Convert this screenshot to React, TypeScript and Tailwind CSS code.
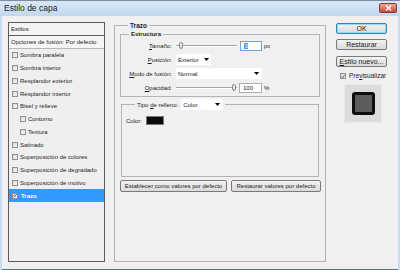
import React from "react";

function Check({ checked = false }: { checked?: boolean }) {
  return (
    <span className="w-[6px] h-[6px] shrink-0 border border-[#8e8f8f] bg-gradient-to-br from-[#d8d8d8] to-[#fbfbfb] flex items-center justify-center">
      {checked && (
        <svg width="5" height="5" viewBox="0 0 5 5">
          <path d="M0.6 2.6 L2 4 L4.5 0.8" stroke="#1f3e6e" strokeWidth="1.1" fill="none" />
        </svg>
      )}
    </span>
  );
}

const items: { t: string; indent?: boolean; sel?: boolean }[] = [
  { t: "Sombra paralela" },
  { t: "Sombra interior" },
  { t: "Resplandor exterior" },
  { t: "Resplandor interior" },
  { t: "Bisel y relieve" },
  { t: "Contorno", indent: true },
  { t: "Textura", indent: true },
  { t: "Satinado" },
  { t: "Superposición de colores" },
  { t: "Superposición de degradado" },
  { t: "Superposición de motivo" },
  { t: "Trazo", sel: true },
];

function Arrow() {
  return (
    <svg width="5" height="3" viewBox="0 0 5 3" className="shrink-0">
      <path d="M0 0 H5 L2.5 3 Z" fill="#000" />
    </svg>
  );
}

function Slider({ pos }: { pos: number }) {
  return (
    <div className="relative w-[61px] h-[11px] flex items-center shrink-0">
      <div className="w-full h-[2px] border-t border-[#a5a5a5] border-b border-b-white" />
      <div
        className="absolute top-[2px] w-[4px] h-[7px] rounded-[2px] border border-[#8a8a8a] bg-gradient-to-b from-[#fafafa] to-[#d6d6d6]"
        style={{ left: pos }}
      />
    </div>
  );
}

function Btn({ children, def = false, w }: { children: React.ReactNode; def?: boolean; w: string }) {
  return (
    <div
      className={
        "flex items-center justify-center whitespace-nowrap rounded-[2px] border leading-none text-[#1a1a1a] bg-gradient-to-b from-[#f3f3f3] to-[#dadada] " +
        w +
        (def ? " border-[#3c7fb1] shadow-[inset_0_0_0_1px_#8fdcf8]" : " border-[#7a7a7a]")
      }
    >
      {children}
    </div>
  );
}

export default function App() {
  return (
    <div className="w-[400px] h-[270px] flex flex-col overflow-hidden bg-[#c8dbef] font-['Liberation_Sans',Arial,sans-serif] text-[#1e1e1e]">
      {/* title bar */}
      <div className="h-[16px] shrink-0 flex items-center justify-between border-t border-[#7f8e9e] bg-gradient-to-b from-[#d9e7f6] to-[#c3d8ef] pl-[4px] pr-[3px]">
        <span className="text-[8.5px] leading-none text-[#1a1a1a]">Estilo de capa</span>
        <div className="w-[18px] h-[10px] mb-[1px] rounded-[2px] border border-[#8a3a32] bg-gradient-to-b from-[#e9a99c] to-[#c9463a] flex items-center justify-center">
          <svg width="7" height="6" viewBox="0 0 7 6">
            <path d="M1 0.5 L6 5.5 M6 0.5 L1 5.5" stroke="#fff" strokeWidth="1.4" />
          </svg>
        </div>
      </div>

      {/* body */}
      <div className="flex-1 flex ml-[2px] mr-[2px] bg-[#f0f0f0] border-b border-[#27849e] pt-[6px] pl-[6px] pb-[7px]">
        {/* left list */}
        <div className="w-[97px] shrink-0 border border-[#5c5c5c] bg-[#efefef] flex flex-col text-[6px] leading-none whitespace-nowrap">
          <div className="h-[13px] shrink-0 flex items-center pl-[2px] border-b border-[#5c5c5c] bg-[#f5f5f5]">Estilos</div>
          <div className="h-[13px] shrink-0 flex items-center pl-[2px] border-b border-[#b8b8b8] bg-[#f5f5f5]">
            Opciones de fusión: Por defecto
          </div>
          {items.map((it) => (
            <div
              key={it.t}
              className={
                "h-[12.75px] shrink-0 flex items-center gap-[2px] " +
                (it.indent ? "pl-[11px] " : "pl-[3px] ") +
                (it.sel ? "bg-[#3399ff] text-white font-bold" : "")
              }
            >
              <Check checked={!!it.sel} />
              <span className={it.sel ? "pl-[1px]" : ""}>{it.t}</span>
            </div>
          ))}
        </div>

        {/* main group */}
        <fieldset className="w-[212px] shrink-0 ml-[9px] border border-[#b4b4b4] px-[5px] text-[6px] leading-none whitespace-nowrap">
          <legend className="ml-[8px] px-[2px] font-bold text-[6.5px] leading-[7px]">Trazo</legend>
          <fieldset className="border border-[#b4b4b4] mt-[1px] pt-[2px] pb-[3px]">
            <legend className="ml-[8px] px-[2px] font-bold text-[6px] leading-[8px]">Estructura</legend>
            <div className="flex flex-col gap-[3px]">
              <div className="flex items-center h-[11px]">
                <span className="w-[55px] text-right pr-[4px]">
                  <u>T</u>amaño:
                </span>
                <Slider pos={3} />
                <div className="ml-[3px] w-[22px] h-[10px] border border-[#6ea5d8] bg-white flex items-center pl-[3px]">
                  <span className="bg-[#3399ff] text-white px-[0.5px]">3</span>
                </div>
                <span className="ml-[2px]">px</span>
              </div>
              <div className="flex items-center h-[11px]">
                <span className="w-[55px] text-right pr-[4px]">
                  <u>P</u>osición:
                </span>
                <div className="w-[35px] h-[11px] bg-white flex items-center justify-between pl-[2px] pr-[2px]">
                  <span>Exterior</span>
                  <Arrow />
                </div>
              </div>
              <div className="flex items-center h-[11px]">
                <span className="w-[55px] text-right pr-[4px]">
                  <u>M</u>odo de fusión:
                </span>
                <div className="w-[86px] h-[11px] bg-white flex items-center justify-between pl-[2px] pr-[3px]">
                  <span>Normal</span>
                  <Arrow />
                </div>
              </div>
              <div className="flex items-center h-[11px]">
                <span className="w-[55px] text-right pr-[4px]">
                  <u>O</u>pacidad:
                </span>
                <Slider pos={56} />
                <div className="ml-[2px] w-[23px] h-[10px] border border-[#abadb3] bg-white flex items-center pl-[3px]">
                  100
                </div>
                <span className="ml-[2px]">%</span>
              </div>
            </div>
          </fieldset>

          <fieldset className="mt-[2px] mx-[1px] h-[78px] border border-[#b4b4b4] pl-[4px]">
            <legend className="ml-[9px] px-[2px] flex items-center gap-[3px] h-[11px]">
              <span>
                Tipo <u>d</u>e relleno:
              </span>
              <div className="w-[42px] h-[11px] bg-white flex items-center justify-between pl-[2px] pr-[3px]">
                <span>Color</span>
                <Arrow />
              </div>
            </legend>
            <div className="flex items-center mt-[6px] gap-[4px]">
              <span>Color:</span>
              <span className="w-[18px] h-[9px] bg-[#0a0a0a] border border-[#7a7a7a]" />
            </div>
          </fieldset>

          <div className="flex gap-[4px] mt-[3px] mr-[-2px]">
            <Btn w="w-[107px] h-[12px] text-[6px]">Establecer como valores por defecto</Btn>
            <Btn w="w-[90px] h-[12px] text-[6px]">Restaurar valores por defecto</Btn>
          </div>
        </fieldset>

        {/* right column */}
        <div className="w-[51px] ml-[10px] pt-[1px] flex flex-col">
          <Btn def w="w-[51px] h-[11px] text-[7px]">
            OK
          </Btn>
          <div className="mt-[5px]">
            <Btn w="w-[51px] h-[11px] text-[7px]">Restaurar</Btn>
          </div>
          <div className="mt-[6px]">
            <Btn w="w-[51px] h-[11px] text-[7px]">
              <u>E</u>stilo nuevo...
            </Btn>
          </div>
          <div className="mt-[6px] flex items-center gap-[3px] pl-[4px] text-[6.5px] leading-none">
            <Check checked />
            <span>
              Pre<u>v</u>isualizar
            </span>
          </div>
          <div className="mt-[4px] ml-[8px] w-[38px] h-[39px] bg-[#dcdcdc] border border-[#e8e8e8] flex items-center justify-center">
            <div className="w-[23px] h-[23px] rounded-[3px] border-[3px] border-[#0d0d0d] bg-[#5c5c5c]" />
          </div>
        </div>
      </div>
    </div>
  );
}
